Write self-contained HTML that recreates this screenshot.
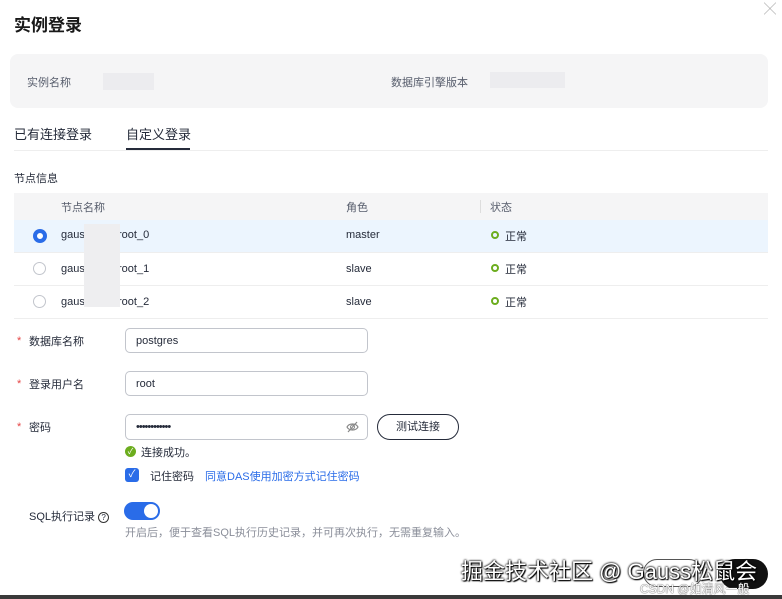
<!DOCTYPE html>
<html><head><meta charset="utf-8"><style>
*{margin:0;padding:0;box-sizing:border-box}
body{width:782px;height:599px;background:#fff;font-family:"Liberation Sans","Noto Sans CJK SC",sans-serif;color:#252b3a;position:relative;overflow:hidden;font-size:11px}
.a{position:absolute;white-space:nowrap}
.g{color:#575d6c}
.inp{position:absolute;left:125px;width:243px;height:25px;border:1px solid #c2c5cc;border-radius:5px;font-size:11px;padding:6px 10px}
.star{color:#e54545;position:absolute;left:17px;font-size:11px}
.radio{position:absolute;left:33px;width:13px;height:13px;border:1px solid #c2c5cc;border-radius:50%}
.ok{position:absolute;left:491px;width:8px;height:8px;border:2px solid #6cad1e;border-radius:50%}
.blur{position:absolute;background:#ececef}
</style></head><body>
<div class="a" style="left:14px;top:11px;font-size:17px;font-weight:bold;color:#191919">实例登录</div>
<div class="a" style="left:764px;top:0;font-size:12px;color:#999">╳</div>
<div class="a" style="left:10px;top:54px;width:758px;height:54px;background:#f5f5f6;border-radius:8px"></div>
<div class="a g" style="left:27px;top:74px">实例名称</div>
<div class="blur" style="left:103px;top:73px;width:51px;height:17px"></div>
<div class="a g" style="left:391px;top:74px">数据库引擎版本</div>
<div class="blur" style="left:490px;top:72px;width:75px;height:16px"></div>
<div class="a" style="left:14px;top:124px;font-size:13px">已有连接登录</div>
<div class="a" style="left:126px;top:124px;font-size:13px">自定义登录</div>
<div class="a" style="left:126px;top:148px;width:64px;height:2px;background:#252b3a"></div>
<div class="a" style="left:14px;top:150px;width:754px;height:1px;background:#eee"></div>
<div class="a" style="left:14px;top:170px">节点信息</div>
<div class="a" style="left:14px;top:193px;width:754px;height:27px;background:#f5f5f6"></div>
<div class="a g" style="left:61px;top:199px">节点名称</div>
<div class="a g" style="left:346px;top:199px">角色</div>
<div class="a" style="left:480px;top:200px;width:1px;height:13px;background:#ddd"></div>
<div class="a g" style="left:490px;top:199px">状态</div>
<div class="a" style="left:14px;top:220px;width:754px;height:33px;background:#ecf5fe"></div>
<div class="a" style="left:14px;top:285px;width:754px;height:1px;background:#eee"></div>
<div class="a" style="left:14px;top:318px;width:754px;height:1px;background:#eee"></div>
<div class="a" style="left:14px;top:252px;width:754px;height:1px;background:#eee"></div>
<div class="radio" style="top:229px;border:4px solid #2a6ce8;background:#fff;width:14px;height:14px"></div>
<div class="radio" style="top:262px"></div>
<div class="radio" style="top:295px"></div>
<div class="a" style="left:61px;top:229px">gaus</div><div class="a" style="left:118px;top:229px">root_0</div>
<div class="a" style="left:61px;top:263px">gaus</div><div class="a" style="left:118px;top:263px">root_1</div>
<div class="a" style="left:61px;top:296px">gaus</div><div class="a" style="left:118px;top:296px">root_2</div>
<div class="blur" style="left:84px;top:224px;width:36px;height:83px;background:#eeeef0"></div>
<div class="a" style="left:346px;top:229px">master</div>
<div class="a" style="left:346px;top:263px">slave</div>
<div class="a" style="left:346px;top:296px">slave</div>
<div class="ok" style="top:231px"></div><div class="a" style="left:505px;top:228px">正常</div>
<div class="ok" style="top:264px"></div><div class="a" style="left:505px;top:261px">正常</div>
<div class="ok" style="top:297px"></div><div class="a" style="left:505px;top:294px">正常</div>
<div class="star" style="top:335px">*</div><div class="a" style="left:29px;top:333px">数据库名称</div>
<div class="inp" style="top:328px">postgres</div>
<div class="star" style="top:378px">*</div><div class="a" style="left:29px;top:376px">登录用户名</div>
<div class="inp" style="top:371px">root</div>
<div class="star" style="top:421px">*</div><div class="a" style="left:29px;top:419px">密码</div>
<div class="inp" style="top:414px;height:26px;letter-spacing:-1px">••••••••••••</div>
<svg class="a" style="left:346px;top:421px" width="13" height="12" viewBox="0 0 13 12"><path d="M1 6C3 2 10 2 12 6C10 10 3 10 1 6Z M2 11L11 1" fill="none" stroke="#888" stroke-width="1.2"/><circle cx="6.5" cy="6" r="2" fill="none" stroke="#888"/></svg>
<div class="a" style="left:377px;top:414px;width:82px;height:26px;border:1px solid #252b3a;border-radius:13px;text-align:center;line-height:24px">测试连接</div>
<div class="a" style="left:125px;top:446px;width:11px;height:11px;border-radius:50%;background:#6cad1e;color:#fff;font-size:8px;text-align:center;line-height:11px">✓</div>
<div class="a" style="left:141px;top:444px">连接成功。</div>
<div class="a" style="left:125px;top:468px;width:14px;height:14px;border-radius:3px;background:#2a6ce8;color:#fff;font-size:10px;text-align:center;line-height:14px">✓</div>
<div class="a" style="left:150px;top:468px">记住密码</div>
<div class="a" style="left:205px;top:468px;color:#2a6ce8">同意DAS使用加密方式记住密码</div>
<div class="a" style="left:29px;top:508px">SQL执行记录 <span style="display:inline-block;width:11px;height:11px;border:1px solid #333;border-radius:50%;font-size:8px;text-align:center;line-height:10px">?</span></div>
<div class="a" style="left:124px;top:502px;width:36px;height:18px;border-radius:9px;background:#2a6ce8"><div style="position:absolute;right:2px;top:2px;width:14px;height:14px;border-radius:50%;background:#fff"></div></div>
<div class="a" style="left:125px;top:524px;color:#8a8e99">开启后，便于查看SQL执行历史记录，并可再次执行，无需重复输入。</div>
<div class="a" style="left:643px;top:559px;width:60px;height:28px;border:1px solid #555;border-radius:14px"></div>
<div class="a" style="left:720px;top:559px;width:48px;height:30px;border-radius:15px;background:#111"></div>
<div class="a" style="left:461px;top:554px;font-size:22px;color:#fff;text-shadow:0 0 2px #000,0 0 2px #000,1px 1px 1px #000">掘金技术社区 @ Gauss松鼠会</div>
<div class="a" style="left:640px;top:580px;font-size:12px;color:#fff;text-shadow:0 0 1px #555,0 0 1px #555">CSDN @如清风一般</div>
<div class="a" style="left:0;top:595px;width:782px;height:4px;background:#3a3a3a"></div>
</body></html>
